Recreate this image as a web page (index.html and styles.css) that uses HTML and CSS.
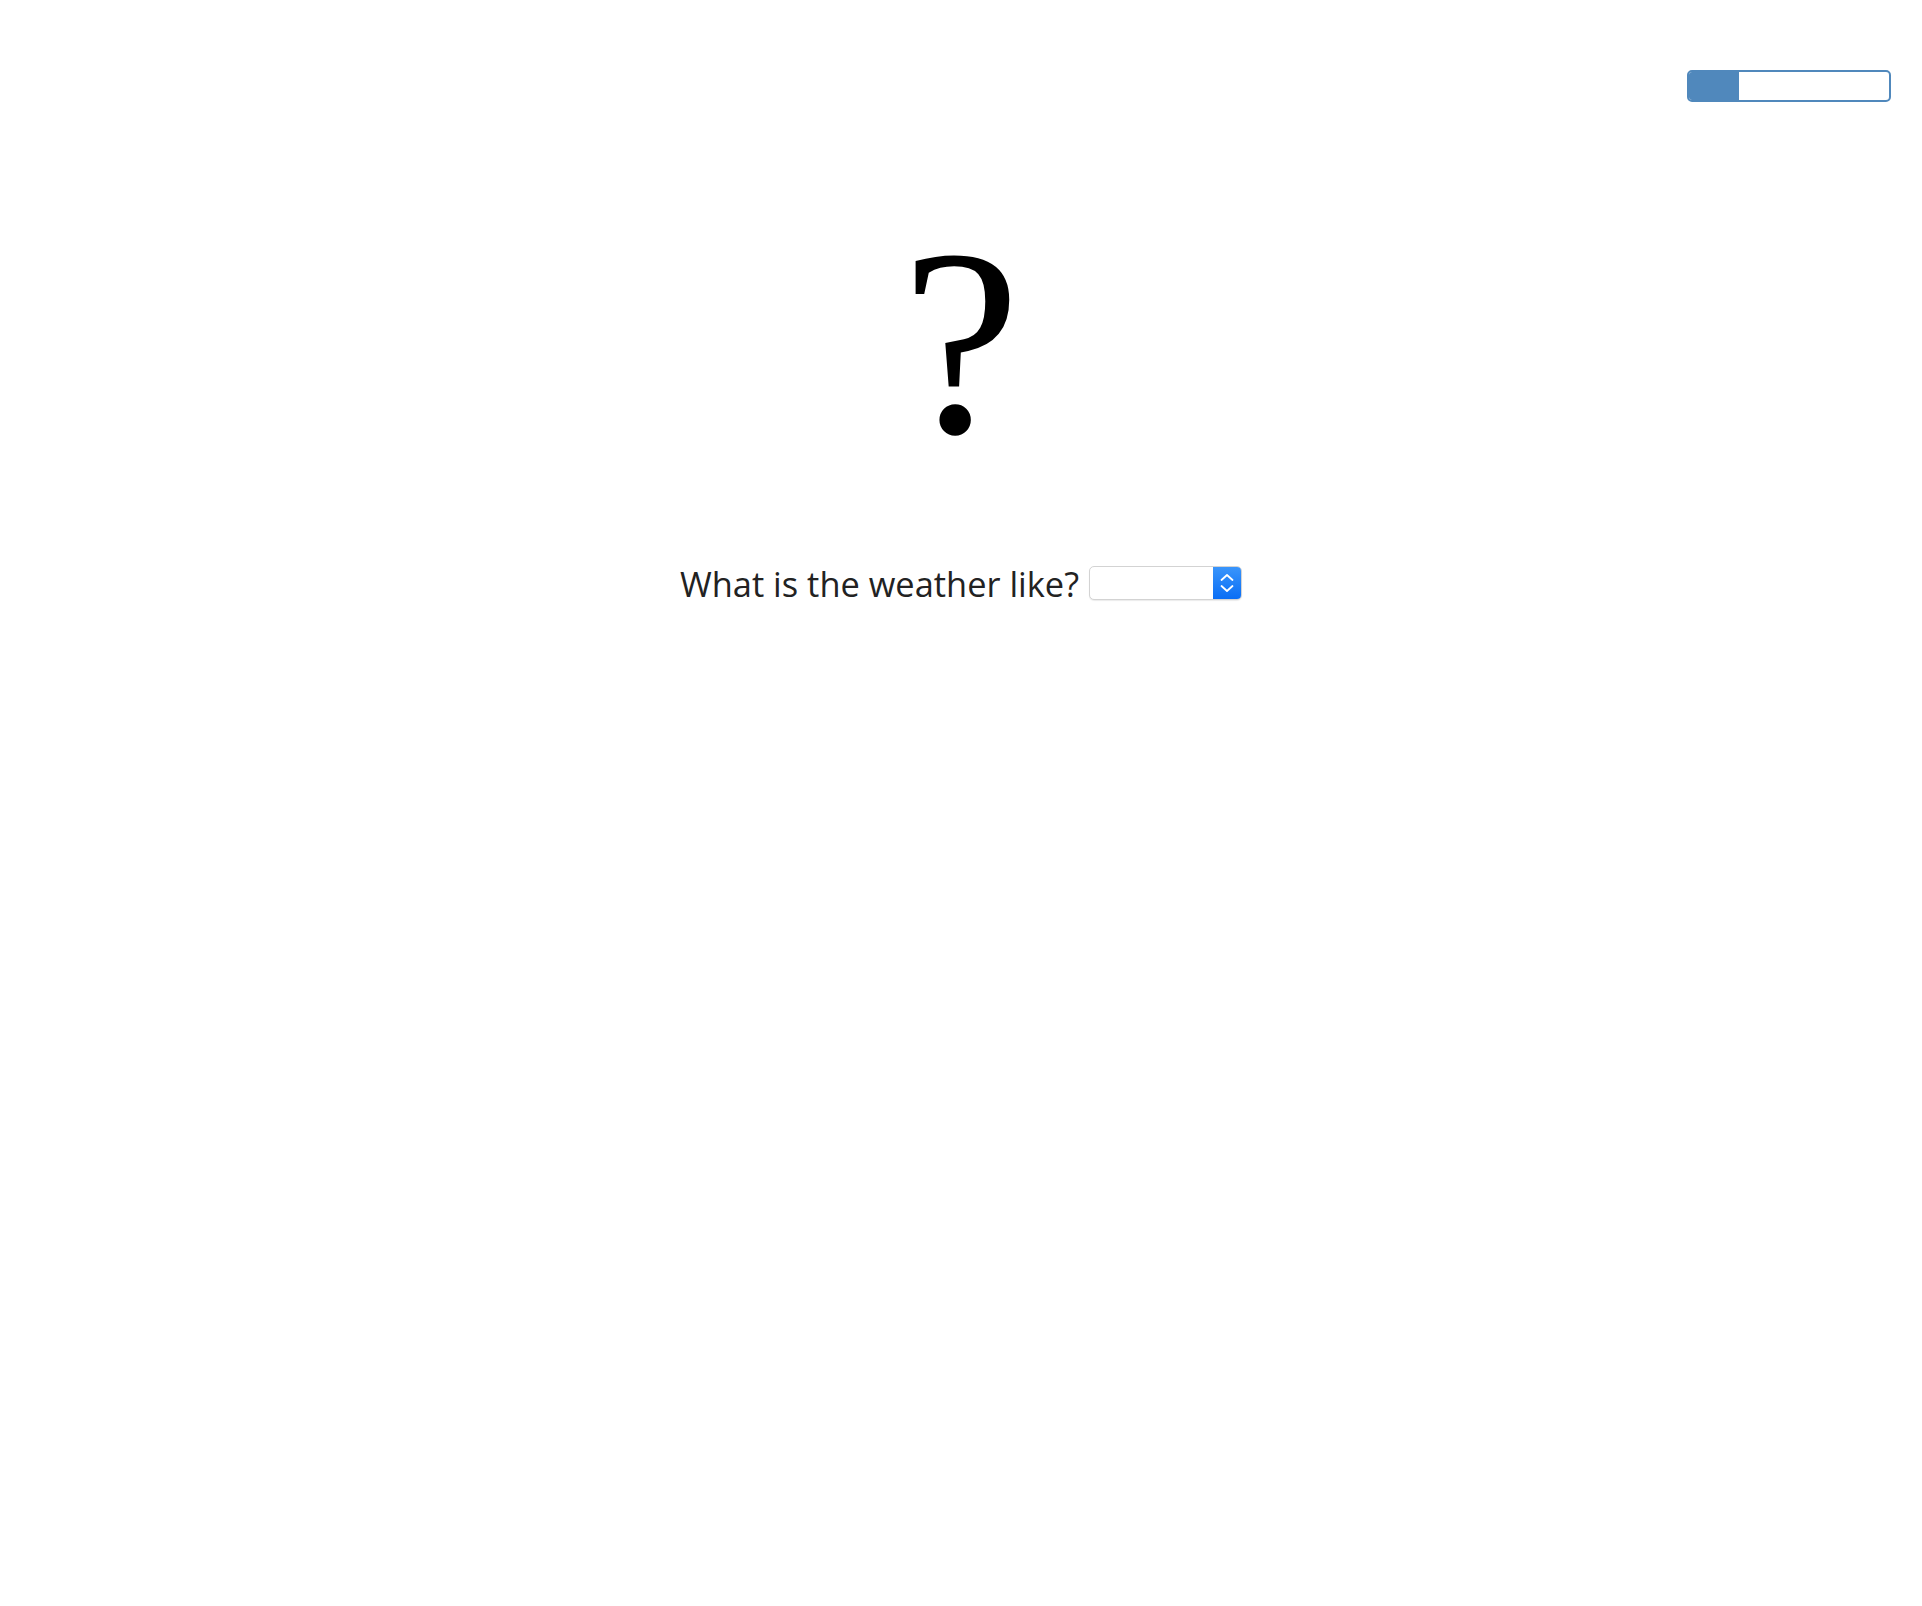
FILE: index.html
```html
<!DOCTYPE html>
<html>
<head>
<meta charset="utf-8">
<link rel="stylesheet" href="styles.css">
</head>
<body>
<div class="top">
  <div class="progress"><div class="progress-fill" style="width:25%"></div></div>
</div>
<div class="mark">?</div>
<div class="question">
  <span class="label">What is the weather like?</span>
  <div class="select">
    <div class="select-field"></div>
    <div class="select-arrows">
      <svg width="14" height="20" viewBox="0 0 14 20"><path d="M1.5 7 L7 2 L12.5 7" fill="none" stroke="#fff" stroke-width="1.8" stroke-linecap="round" stroke-linejoin="round"/><path d="M1.5 13 L7 18 L12.5 13" fill="none" stroke="#fff" stroke-width="1.8" stroke-linecap="round" stroke-linejoin="round"/></svg>
    </div>
  </div>
</div>
</body>
</html>
```
FILE: styles.css
```css
html, body {
  margin: 0;
  padding: 0;
  background: #fff;
}
body {
  font-family: "Open Sans", "Noto Sans", sans-serif;
}
.top {
  display: flex;
  justify-content: flex-end;
  padding: 70px 31px 0 0;
}
.progress {
  width: 204px;
  height: 32px;
  box-sizing: border-box;
  border: 2px solid #5088bc;
  border-radius: 5px;
  overflow: hidden;
  background: #fff;
}
.progress-fill {
  height: 100%;
  background: #5088bc;
}
.mark {
  font-family: "Liberation Serif", "Times New Roman", serif;
  font-size: 266.67px;
  line-height: 1;
  text-align: center;
  color: #000;
  margin-top: 107px;
}
.question {
  display: flex;
  justify-content: center;
  align-items: center;
  margin-top: 87px;
}
.label {
  font-size: 34.4px;
  color: #222;
  line-height: 1.2;
}
.select {
  display: flex;
  width: 153px;
  height: 34px;
  margin-left: 10px;
  box-sizing: border-box;
  border: 1px solid #d3d3d3;
  border-radius: 5px;
  background: #fff;
  overflow: hidden;
  box-shadow: 0 1px 1px rgba(0,0,0,0.08);
}
.select-field {
  flex: 1;
}
.select-arrows {
  width: 28px;
  display: flex;
  align-items: center;
  justify-content: center;
  background: linear-gradient(#3a95fb, #0a6ef5);
}
```
